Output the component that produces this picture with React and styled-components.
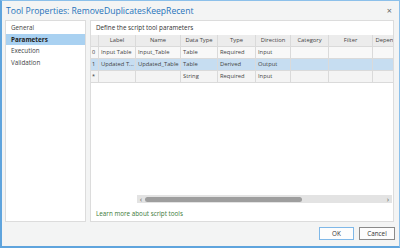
import React from 'react'
import styled, { createGlobalStyle } from 'styled-components'

const GlobalStyle = createGlobalStyle`
  html, body {
    margin: 0;
    padding: 0;
    background: #f3f4f4;
  }
  * {
    box-sizing: border-box;
  }
`

const columns = [
  { key: 'label', title: 'Label', width: 37 },
  { key: 'name', title: 'Name', width: 45 },
  { key: 'dataType', title: 'Data Type', width: 37 },
  { key: 'type', title: 'Type', width: 38 },
  { key: 'direction', title: 'Direction', width: 35 },
  { key: 'category', title: 'Category', width: 38 },
  { key: 'filter', title: 'Filter', width: 44 },
  { key: 'dependency', title: 'Dependency', width: 40 },
]

const rows = [
  { id: '0', label: 'Input Table', name: 'Input_Table', dataType: 'Table', type: 'Required', direction: 'Input' },
  { id: '1', label: 'Updated T...', name: 'Updated_Table', dataType: 'Table', type: 'Derived', direction: 'Output', selected: true },
  { id: '*', label: '', name: '', dataType: 'String', type: 'Required', direction: 'Input', isNew: true },
]

const tabs = ['General', 'Parameters', 'Execution', 'Validation']

const App = () => {
  return (
    <>
      <GlobalStyle />
      <Dialog>
        <TitleBar>
          <Title>Tool Properties: RemoveDuplicatesKeepRecent</Title>
          <Close>×</Close>
        </TitleBar>
        <Body>
          <Sidebar>
            {tabs.map((t) => (
              <Tab key={t} $active={t === 'Parameters'}>
                {t}
              </Tab>
            ))}
          </Sidebar>
          <Main>
            <Caption>Define the script tool parameters</Caption>
            <Grid>
              <HeaderRow>
                <RowNum $header />
                {columns.map((c) => (
                  <HeadCell key={c.key} $w={c.width}>
                    {c.title}
                  </HeadCell>
                ))}
              </HeaderRow>
              {rows.map((r) => (
                <Row key={r.id} $selected={r.selected} $isNew={r.isNew}>
                  <RowNum>{r.id}</RowNum>
                  {columns.map((c) => (
                    <Cell key={c.key} $w={c.width}>
                      {r[c.key]}
                    </Cell>
                  ))}
                </Row>
              ))}
            </Grid>
            <HScroll>
              <Arrow>‹</Arrow>
              <Thumb />
              <Arrow $right>›</Arrow>
            </HScroll>
            <Link>Learn more about script tools</Link>
          </Main>
        </Body>
        <Footer>
          <Button $primary>OK</Button>
          <Button>Cancel</Button>
        </Footer>
      </Dialog>
    </>
  )
}

const Dialog = styled.div`
  width: 400px;
  height: 248px;
  display: flex;
  flex-direction: column;
  background: #f3f4f4;
  border: 1px solid #8cc0ea;
  border-left: 2px solid #5fa4dd;
  border-bottom: 2px solid #5fa4dd;
  font-family: 'Open Sans', 'Noto Sans', sans-serif;
  color: #333;
  overflow: hidden;
`

const TitleBar = styled.div`
  height: 19px;
  flex: none;
  display: flex;
  align-items: center;
  justify-content: space-between;
  padding: 0 7px 0 4px;
`

const Title = styled.div`
  font-size: 8.6px;
  color: #2673bb;
  white-space: nowrap;
`

const Close = styled.div`
  font-size: 9px;
  color: #666;
  line-height: 1;
`

const Body = styled.div`
  height: 202px;
  flex: none;
  display: flex;
  gap: 4px;
  padding: 0 5px 0 3px;
`

const Sidebar = styled.div`
  width: 81px;
  background: #fff;
  border: 1px solid #dcdcdc;
  padding-top: 1px;
  display: flex;
  flex-direction: column;
`

const Tab = styled.div`
  height: 11.5px;
  line-height: 11.5px;
  padding-left: 5px;
  font-size: 6.3px;
  font-weight: ${(p) => (p.$active ? 700 : 400)};
  color: ${(p) => (p.$active ? '#222' : '#444')};
  background: ${(p) => (p.$active ? '#a9d1f1' : 'transparent')};
`

const Main = styled.div`
  flex: 1;
  background: #fff;
  border: 1px solid #dcdcdc;
  display: flex;
  flex-direction: column;
  min-width: 0;
`

const Caption = styled.div`
  height: 14px;
  flex: none;
  line-height: 14px;
  padding-left: 5px;
  font-size: 6.3px;
  color: #333;
`

const Grid = styled.div`
  flex: 1 1 0;
  min-height: 0;
  overflow: hidden;
`

const HeaderRow = styled.div`
  display: flex;
  height: 12px;
  background: #ececec;
  border-bottom: 1px solid #dadada;
`

const Row = styled.div`
  display: flex;
  height: 12px;
  background: ${(p) => (p.$selected ? '#c6ddf1' : p.$isNew ? '#f4f4f4' : '#f8f8f8')};
  border-bottom: 1px solid #dadada;
`

const RowNum = styled.div`
  width: 8px;
  flex: none;
  font-size: 5.5px;
  line-height: 11px;
  padding-left: 1px;
  border-right: 1px solid #dadada;
  background: ${(p) => (p.$header ? '#ececec' : 'transparent')};
`

const HeadCell = styled.div`
  flex: none;
  width: ${(p) => p.$w}px;
  font-size: 5.8px;
  line-height: 11px;
  text-align: center;
  white-space: nowrap;
  overflow: hidden;
  border-right: 1px solid #dadada;
  color: #444;
`

const Cell = styled.div`
  flex: none;
  width: ${(p) => p.$w}px;
  font-size: 5.8px;
  line-height: 11px;
  padding-left: 2px;
  white-space: nowrap;
  overflow: hidden;
  border-right: 1px solid #dadada;
  color: #444;
`

const HScroll = styled.div`
  flex: none;
  align-self: flex-end;
  width: 255px;
  height: 8px;
  margin: 0 1px 1px 0;
  background: #e3e3e3;
  display: flex;
  align-items: center;
`

const Arrow = styled.div`
  width: 8px;
  flex: none;
  font-size: 8px;
  line-height: 8px;
  text-align: center;
  color: #666;
  margin-left: ${(p) => (p.$right ? 'auto' : '0')};
`

const Thumb = styled.div`
  width: 157px;
  flex: none;
  height: 5px;
  border-radius: 3px;
  background: #9e9e9e;
`

const Link = styled.div`
  height: 17px;
  flex: none;
  padding-left: 5px;
  padding-top: 5px;
  font-size: 6.3px;
  line-height: 10px;
  color: #3b7a37;
`

const Footer = styled.div`
  flex: 1;
  display: flex;
  justify-content: flex-end;
  align-items: center;
  gap: 5px;
  padding: 0 4px 1px 0;
`

const Button = styled.div`
  width: ${(p) => (p.$primary ? '35px' : '36px')};
  height: 13px;
  display: flex;
  align-items: center;
  justify-content: center;
  font-size: 6.3px;
  color: #333;
  background: #fdfdfd;
  border: 1px solid ${(p) => (p.$primary ? '#7fb8e8' : '#8a8a8a')};
`

export default App
